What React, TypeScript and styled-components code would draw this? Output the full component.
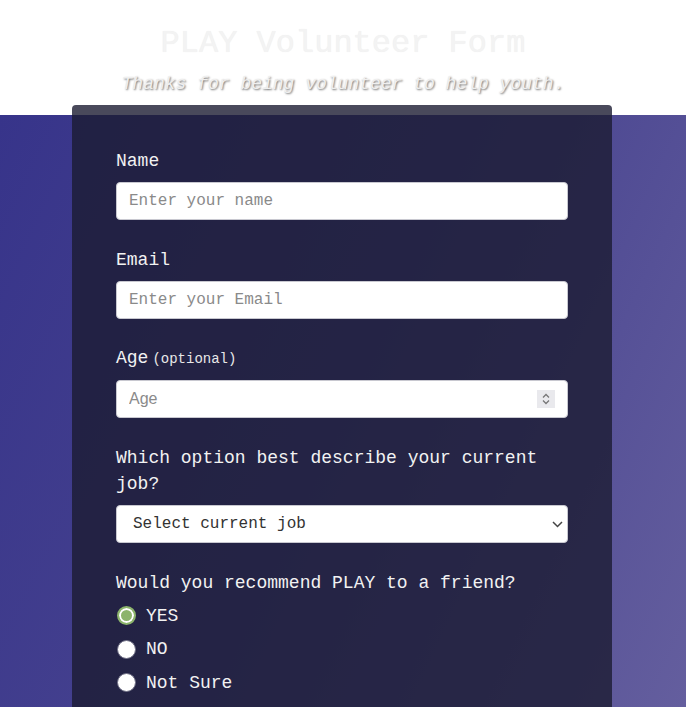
import React from "react";
import styled, { createGlobalStyle } from "styled-components";

const Global = createGlobalStyle`
  html, body { margin: 0; padding: 0; background: #fff; }
  body { font-family: "Liberation Mono", "DejaVu Sans Mono", monospace; }
  * { box-sizing: border-box; }
`;

const Header = styled.header`
  height: 115px;
  background: #ffffff;
  display: flex;
  flex-direction: column;
  align-items: center;
  padding-top: 25px;
`;

const Title = styled.h1`
  margin: 0;
  font-family: "Liberation Mono", monospace;
  font-weight: 400;
  font-size: 32px;
  line-height: 38px;
  color: #f3f3f3;
  text-shadow: 0 0 1px rgba(0, 0, 0, 0.08);
`;

const Subtitle = styled.p`
  margin: 11px 0 0;
  font-family: "Liberation Mono", monospace;
  font-style: italic;
  font-size: 18px;
  line-height: 20px;
  color: #efefef;
  text-shadow: 1px 1px 2px #6f6f6f;
`;

const Main = styled.main`
  background: linear-gradient(115deg, #37348a 0%, #46428f 45%, #66609f 100%);
  display: flex;
  justify-content: center;
  padding: 0 2px 40px 0;
`;

const Card = styled.form`
  width: 540px;
  margin-top: -10px;
  background: rgba(27, 27, 50, 0.8);
  border-radius: 4px;
  padding: 43px 44px 40px;
  display: flex;
  flex-direction: column;
  gap: 26.7px;
`;

const Group = styled.div`
  display: flex;
  flex-direction: column;
  gap: 8px;
`;

const Label = styled.label`
  color: #f2f2f2;
  font-size: 18px;
  line-height: 26px;
`;

const Hint = styled.span`
  font-size: 14px;
  margin-left: 4px;
  color: #e8e8e8;
`;

const TextInput = styled.input`
  height: 38px;
  width: 100%;
  border: 1px solid #c8c8d0;
  border-radius: 4px;
  background: #fff;
  padding: 0 12px;
  font-family: "Liberation Mono", monospace;
  font-size: 16px;
  color: #333;
  outline: none;
  &::placeholder { color: #8a8a8a; }
`;

const Field = styled.div<{ $end?: number }>`
  height: 38px;
  display: flex;
  align-items: center;
  border: 1px solid #c8c8d0;
  border-radius: 4px;
  background: #fff;
  padding: 0 ${(p) => p.$end ?? 12}px 0 12px;
`;

const NumberInput = styled.input`
  flex: 1;
  min-width: 0;
  border: none;
  outline: none;
  padding: 0;
  background: transparent;
  font-family: "Liberation Sans", Arial, sans-serif;
  font-size: 16px;
  color: #333;
  &::placeholder { color: #8a8a8a; }
  &::-webkit-inner-spin-button, &::-webkit-outer-spin-button {
    -webkit-appearance: none;
    margin: 0;
  }
`;

const Spinner = styled.span`
  width: 18px;
  height: 18px;
  background: #e9e9ed;
  display: flex;
  align-items: center;
  justify-content: center;
`;

const SelectText = styled.span`
  flex: 1;
  padding-left: 4px;
  font-family: "Liberation Mono", monospace;
  font-size: 16px;
  color: #333;
`;

const RadioList = styled.div`
  display: flex;
  flex-direction: column;
  margin-top: -5px;
`;

const RadioRow = styled.label`
  height: 33.5px;
  display: flex;
  align-items: center;
  gap: 10px;
  color: #f2f2f2;
  font-size: 18px;
`;

const Dot = styled.span<{ $checked?: boolean }>`
  width: 19px;
  height: 19px;
  margin-left: 1px;
  border-radius: 50%;
  flex: none;
  background: ${(p) => (p.$checked ? "#8cb46c" : "#ffffff")};
  border: ${(p) => (p.$checked ? "2px solid #8cb46c" : "1.5px solid #6e6e84")};
  box-shadow: ${(p) => (p.$checked ? "inset 0 0 0 2px #ffffff" : "none")};
`;

const answers = ["YES", "NO", "Not Sure"];

export default function App() {
  return (
    <>
      <Global />
      <Header>
        <Title>PLAY Volunteer Form</Title>
        <Subtitle>Thanks for being volunteer to help youth.</Subtitle>
      </Header>
      <Main>
        <Card onSubmit={(e) => e.preventDefault()}>
          <Group>
            <Label htmlFor="name">Name</Label>
            <TextInput id="name" placeholder="Enter your name" />
          </Group>
          <Group>
            <Label htmlFor="email">Email</Label>
            <TextInput id="email" placeholder="Enter your Email" />
          </Group>
          <Group>
            <Label htmlFor="age">
              Age<Hint>(optional)</Hint>
            </Label>
            <Field>
              <NumberInput id="age" type="number" placeholder="Age" />
              <Spinner>
                <svg width="10" height="14" viewBox="0 0 10 14" fill="none" stroke="#777" strokeWidth="1.3">
                  <path d="M2 5.5 L5 2.5 L8 5.5" />
                  <path d="M2 8.5 L5 11.5 L8 8.5" />
                </svg>
              </Spinner>
            </Field>
          </Group>
          <Group>
            <Label>Which option best describe your current job?</Label>
            <Field $end={4}>
              <SelectText>Select current job</SelectText>
              <svg width="11" height="7" viewBox="0 0 11 7" fill="none" stroke="#444" strokeWidth="1.5">
                <path d="M1 1 L5.5 5.5 L10 1" />
              </svg>
            </Field>
          </Group>
          <Group>
            <Label>Would you recommend PLAY to a friend?</Label>
            <RadioList>
              {answers.map((a, i) => (
                <RadioRow key={a}>
                  <Dot $checked={i === 0} />
                  {a}
                </RadioRow>
              ))}
            </RadioList>
          </Group>
        </Card>
      </Main>
    </>
  );
}
